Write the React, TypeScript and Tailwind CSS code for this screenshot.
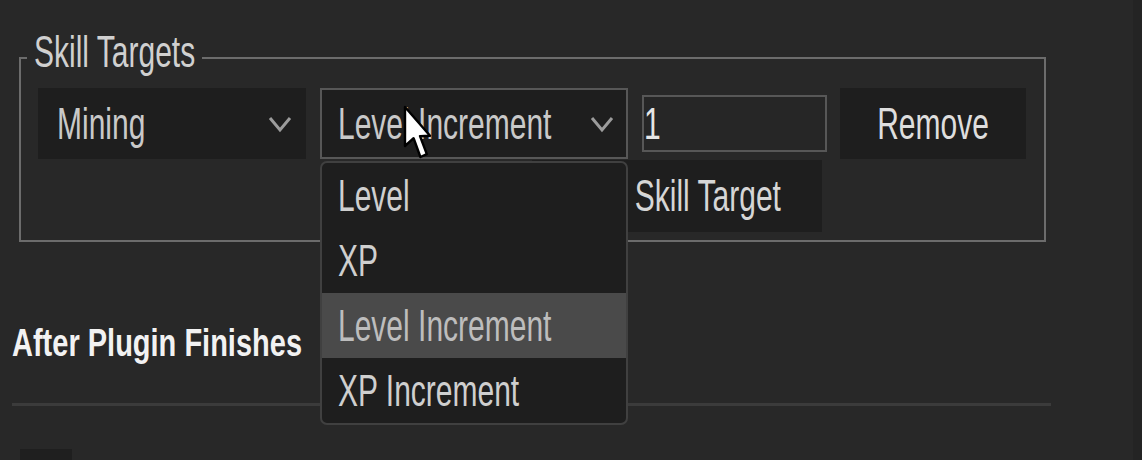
import React from 'react';

// Pixel-font look: narrow sans, stretched vertically
const PX =
  "inline-block origin-center scale-y-[1.45] font-['Liberation_Sans',Arial,sans-serif] text-[30px] leading-[30px]";

const OPTIONS = ['Level', 'XP', 'Level Increment', 'XP Increment'];

function Chevron() {
  return (
    <svg width="24" height="18" viewBox="0 0 24 18" className="shrink-0">
      <polyline
        points="2,3 12,15 22,3"
        fill="none"
        stroke="#9c9c9c"
        strokeWidth="3"
        strokeLinejoin="miter"
      />
    </svg>
  );
}

function Cursor() {
  return (
    <svg
      width="30"
      height="56"
      viewBox="0 0 15 28"
      className="pointer-events-none absolute left-[402px] top-[105px] z-20"
    >
      <path
        d="M1.5 1 L1.5 20.5 L5.8 16.6 L9.2 26 L12.4 24.6 L9 15.6 L14 15.4 Z"
        fill="#ffffff"
        stroke="#000000"
        strokeWidth="1.2"
        strokeLinejoin="round"
      />
    </svg>
  );
}

export default function App() {
  return (
    <div className="relative flex h-[460px] w-[1142px] overflow-hidden bg-[#282828] font-['Liberation_Sans',Arial,sans-serif]">
      <main className="flex-1 pl-[12px] pt-[37px]">
        <fieldset className="ml-[7px] w-[1027px] border-2 border-[#6c6c6c] pb-[8px] pt-[9px]">
          <legend className="ml-[6px] px-[7px] pb-[10px] text-[#d0d0d0]">
            <span className={PX}>Skill Targets</span>
          </legend>

          <div className="pl-[17px]">
            <div className="flex items-center">
              <div className="flex h-[71px] w-[268px] items-center justify-between bg-[#1e1e1e] pl-[19px] pr-[14px] text-[#c9c9c9]">
                <span className={PX}>Mining</span>
                <Chevron />
              </div>

              <div className="relative ml-[14px] w-[308px]">
                <div className="flex h-[71px] items-center justify-between border-2 border-[#575757] bg-[#1e1e1e] pl-[16px] pr-[12px] text-[#c9c9c9]">
                  <span className={PX}>Level Increment</span>
                  <Chevron />
                </div>

                <ul className="absolute left-0 top-[calc(100%+2px)] z-10 w-full overflow-hidden rounded-[7px] border-2 border-[#404040] bg-[#1e1e1e]">
                  {OPTIONS.map((opt) => (
                    <li
                      key={opt}
                      className={
                        opt === 'Level Increment'
                          ? 'flex h-[65px] items-center bg-[#4a4a4a] pl-[16px] text-[#bdbdbd]'
                          : 'flex h-[65px] items-center pl-[16px] text-[#cfcfcf]'
                      }
                    >
                      <span className={PX}>{opt}</span>
                    </li>
                  ))}
                </ul>
              </div>

              <div className="ml-[14px] flex h-[57px] w-[185px] items-center border-2 border-[#575757] bg-[#262626] text-[#e6e6e6]">
                <span className={PX}>1</span>
              </div>

              <button className="ml-[13px] flex h-[71px] w-[186px] items-center justify-center bg-[#1e1e1e] text-[#dedede]">
                <span className={PX}>Remove</span>
              </button>
            </div>

            <div className="mt-[1px] flex">
              <button className="ml-[494px] flex h-[72px] w-[290px] items-center justify-center bg-[#1e1e1e] text-[#d6d6d6]">
                <span className={PX}>Add Skill Target</span>
              </button>
            </div>
          </div>
        </fieldset>

        <h2 className="mt-[85px] text-[29px] font-bold leading-[30px] text-[#f2f2f2]">
          <span className="inline-block origin-center scale-y-[1.35]">After Plugin Finishes</span>
        </h2>

        <div className="mt-[46px] h-[3px] w-[1039px] bg-[#3b3b3b]" />

        <div className="ml-[8px] mt-[43px] h-[20px] w-[52px] bg-[#1f1f1f]" />
      </main>

      <aside className="h-full w-[9px] bg-[#242424]" />

      <Cursor />
    </div>
  );
}
